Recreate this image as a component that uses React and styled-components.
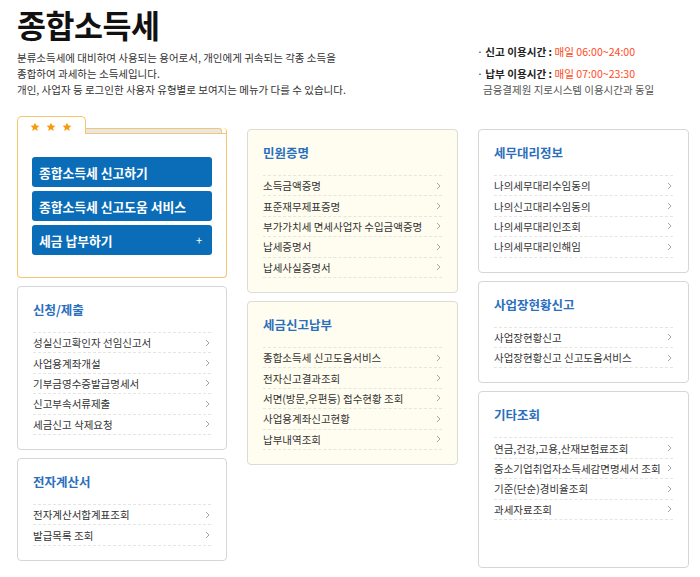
import React from "react";
import styled, { createGlobalStyle } from "styled-components";

const GlobalStyle = createGlobalStyle`
  * { box-sizing: border-box; }
  body {
    margin: 0;
    background: #fff;
    font-family: "Noto Sans CJK KR", "Noto Sans", sans-serif;
    color: #333;
  }
`;

const Page = styled.div`
  width: 700px;
  padding: 6px 0 0 17px;
`;

const Header = styled.header`
  display: flex;
  width: 672px;
  height: 110px;
`;

const Intro = styled.div`
  flex: 1;
`;

const Title = styled.h1`
  margin: 0;
  font-size: 31.5px;
  line-height: 36px;
  font-weight: 700;
  color: #111;
  letter-spacing: -0.5px;
`;

const Desc = styled.p`
  margin: 8px 0 0;
  font-size: 10.5px;
  line-height: 16px;
  color: #333;
  white-space: nowrap;
`;

const Info = styled.div`
  width: 212px;
  padding-top: 38px;
  white-space: nowrap;
`;

const InfoRow = styled.div`
  font-size: 10.6px;
  line-height: 16px;
  margin-top: ${(p) => p.$gap || 0}px;
  color: #333;
`;

const InfoLabel = styled.b`
  font-weight: 700;
  color: #222;
`;

const Red = styled.span`
  color: #ff4a1c;
`;

const InfoNote = styled.div`
  padding-left: 6px;
  font-size: 10.5px;
  line-height: 15px;
  color: #555;
`;

const Grid = styled.div`
  display: grid;
  grid-template-columns: 210px 211px 211px;
  column-gap: 20px;
  align-items: start;
`;

const Column = styled.div`
  display: flex;
  flex-direction: column;
  gap: 8px;
  margin-top: ${(p) => p.$offset || 0}px;
`;

const orange = "#f6c66c";

const Fav = styled.div`
  display: flex;
  flex-direction: column;
`;

const TabRow = styled.div`
  display: flex;
  height: 18px;
`;

const Tab = styled.div`
  width: 69px;
  height: 18px;
  border: 1px solid ${orange};
  border-bottom: 0;
  border-radius: 5px 5px 0 0;
  background: #fff;
  display: flex;
  align-items: flex-end;
  gap: 6px;
  padding: 0 0 2px 12px;
`;

const TabRest = styled.div`
  flex: 1;
  align-self: flex-end;
  height: 6px;
  border-bottom: 1px solid ${orange};
  border-right: 1px solid ${orange};
  border-top-right-radius: 4px;
  display: flex;
`;

const Strip = styled.div`
  flex: 1;
  margin-right: 4px;
  background: #e7e7e7;
  border-top: 1px solid ${orange};
  border-right: 1px solid ${orange};
  border-top-right-radius: 3px;
`;

const FavBody = styled.div`
  border: 1px solid ${orange};
  border-top: 0;
  border-radius: 0 0 4px 4px;
  padding: 23px 14px 22px;
  display: flex;
  flex-direction: column;
  gap: 4px;
`;

const BlueButton = styled.a`
  display: flex;
  align-items: center;
  justify-content: space-between;
  height: 30px;
  padding: 0 10px 0 7px;
  border-radius: 3px;
  background: #0b6db7;
  color: #fff;
  font-size: 12.8px;
  font-weight: 700;
  text-decoration: none;
  cursor: pointer;
  white-space: nowrap;
`;

const Plus = styled.span`
  font-size: 11px;
  font-weight: 400;
  line-height: 1;
`;

const Box = styled.section`
  border: 1px solid ${(p) => (p.$cream ? "#dcdcd4" : "#d6d6d6")};
  border-radius: 4px;
  background: ${(p) => (p.$cream ? "#fffdef" : "#fff")};
  padding: 15px 15px 14px;
  min-height: ${(p) => (p.$minH ? `${p.$minH}px` : "auto")};
`;

const BoxTitle = styled.h2`
  margin: 0 0 14px;
  font-size: 12.5px;
  line-height: 16px;
  font-weight: 700;
  color: #2a6fbe;
`;

const List = styled.ul`
  list-style: none;
  margin: 0;
  padding: 0;
  border-top: 1px dashed #e6e6e0;
`;

const Item = styled.li`
  display: flex;
  align-items: center;
  justify-content: space-between;
  height: 20.4px;
  border-bottom: 1px dashed #e6e6e0;
  font-size: 10.5px;
  color: #333;
  padding-right: 1px;
  cursor: pointer;
  white-space: nowrap;
`;

const Star = () => (
  <svg width="10" height="10" viewBox="0 0 24 24">
    <path
      d="M12 1.5l3.1 6.9 7.4.7-5.6 5 1.7 7.4L12 17.6l-6.6 3.9 1.7-7.4-5.6-5 7.4-.7z"
      fill="#f59b0c"
    />
  </svg>
);

const Chevron = () => (
  <svg width="5" height="8" viewBox="0 0 5 8">
    <path d="M1 1l3 3-3 3" fill="none" stroke="#9a9a9a" strokeWidth="0.9" />
  </svg>
);

const MenuBox = ({ title, items, cream, minH }) => (
  <Box $cream={cream} $minH={minH}>
    <BoxTitle>{title}</BoxTitle>
    <List>
      {items.map((it) => (
        <Item key={it}>
          <span>{it}</span>
          <Chevron />
        </Item>
      ))}
    </List>
  </Box>
);

export default function App() {
  return (
    <Page>
      <GlobalStyle />
      <Header>
        <Intro>
          <Title>종합소득세</Title>
          <Desc>
            분류소득세에 대비하여 사용되는 용어로서, 개인에게 귀속되는 각종 소득을
            <br />
            종합하여 과세하는 소득세입니다.
            <br />
            개인, 사업자 등 로그인한 사용자 유형별로 보여지는 메뉴가 다를 수 있습니다.
          </Desc>
        </Intro>
        <Info>
          <InfoRow>
            · <InfoLabel>신고 이용시간 :</InfoLabel> <Red>매일 06:00~24:00</Red>
          </InfoRow>
          <InfoRow $gap={6}>
            · <InfoLabel>납부 이용시간 :</InfoLabel> <Red>매일 07:00~23:30</Red>
          </InfoRow>
          <InfoNote>금융결제원 지로시스템 이용시간과 동일</InfoNote>
        </Info>
      </Header>

      <Grid>
        <Column>
          <Fav>
            <TabRow>
              <Tab>
                <Star />
                <Star />
                <Star />
              </Tab>
              <TabRest>
                <Strip />
              </TabRest>
            </TabRow>
            <FavBody>
              <BlueButton>종합소득세 신고하기</BlueButton>
              <BlueButton>종합소득세 신고도움 서비스</BlueButton>
              <BlueButton>
                세금 납부하기
                <Plus>+</Plus>
              </BlueButton>
            </FavBody>
          </Fav>
          <MenuBox
            title="신청/제출"
            items={[
              "성실신고확인자 선임신고서",
              "사업용계좌개설",
              "기부금영수증발급명세서",
              "신고부속서류제출",
              "세금신고 삭제요청",
            ]}
          />
          <MenuBox title="전자계산서" items={["전자계산서합계표조회", "발급목록 조회"]} />
        </Column>

        <Column $offset={13}>
          <MenuBox
            cream
            title="민원증명"
            items={[
              "소득금액증명",
              "표준재무제표증명",
              "부가가치세 면세사업자 수입금액증명",
              "납세증명서",
              "납세사실증명서",
            ]}
          />
          <MenuBox
            cream
            title="세금신고납부"
            items={[
              "종합소득세 신고도움서비스",
              "전자신고결과조회",
              "서면(방문,우편등) 접수현황 조회",
              "사업용계좌신고현황",
              "납부내역조회",
            ]}
          />
        </Column>

        <Column $offset={13}>
          <MenuBox
            title="세무대리정보"
            items={["나의세무대리수임동의", "나의신고대리수임동의", "나의세무대리인조회", "나의세무대리인해임"]}
          />
          <MenuBox title="사업장현황신고" items={["사업장현황신고", "사업장현황신고 신고도움서비스"]} />
          <MenuBox
            title="기타조회"
            minH={177}
            items={[
              "연금,건강,고용,산재보험료조회",
              "중소기업취업자소득세감면명세서 조회",
              "기준(단순)경비율조회",
              "과세자료조회",
            ]}
          />
        </Column>
      </Grid>
    </Page>
  );
}
